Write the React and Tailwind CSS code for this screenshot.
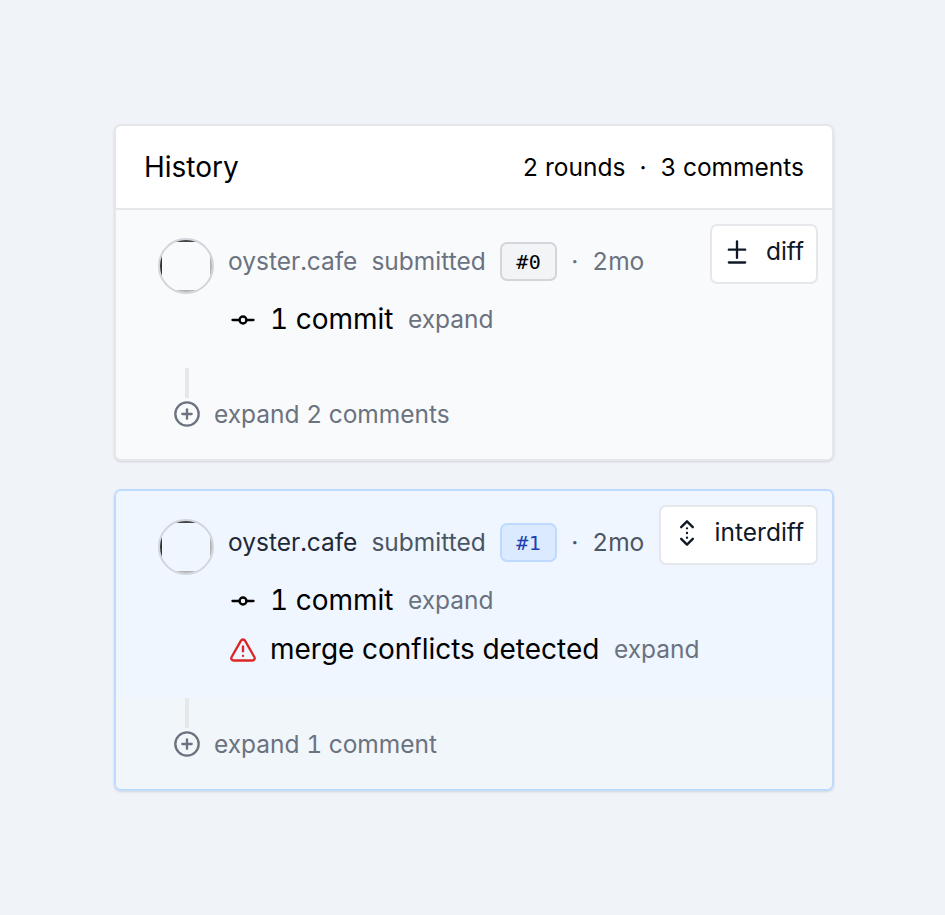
import { CirclePlus, Diff, GitCommitHorizontal, TriangleAlert } from 'lucide-react'

function InterdiffIcon({ className }) {
  return (
    <svg
      viewBox="0 0 24 24"
      fill="none"
      stroke="currentColor"
      strokeWidth="2"
      strokeLinecap="round"
      strokeLinejoin="round"
      className={className}
    >
      <path d="m7 7 5-5 5 5" />
      <path d="m7 17 5 5 5-5" />
      <path d="M12 8v.01M12 12v.01M12 16v.01" />
    </svg>
  )
}

function Avatar() {
  return (
    <div className="mt-[14px] size-14 shrink-0 overflow-hidden rounded-full border-2 border-gray-300">
      <div className="size-full border-2 border-t-[#444444] border-r-[#b4b4b0] border-b-[#b4b4b0] border-l-[#333333]" />
    </div>
  )
}

function Detail({ icon, children }) {
  return (
    <div className="flex h-[42px] items-center gap-[14px]">
      <span className="-mr-px ml-px mt-[2px]">{icon}</span>
      <span className="text-[28px] text-black">{children}</span>
      <span className="ml-[0.5px] text-[24.5px] text-[#6b7280]">expand</span>
    </div>
  )
}

function Round({ number, active, action, ActionIcon, conflicts }) {
  return (
    <div className={`flex gap-[14px] pt-[14px] pr-[14px] pb-7 pl-[42px] ${active ? 'bg-blue-50' : 'bg-gray-50'}`}>
      <Avatar />
      <div className="flex min-w-0 flex-1 flex-col gap-[7px]">
        <div className="mb-[7px] flex items-start justify-between">
          <div className={`-mb-[14px] flex h-[74px] items-center gap-[14px] text-[24.5px] ${active ? 'text-[#4b5563]' : 'text-[#6b7280]'}`}>
            <span className={active ? 'text-[#1f2937]' : 'text-[#6b7280]'}>oyster.cafe</span>
            <span>submitted</span>
            <span
              className={`ml-[0.5px] flex h-[39px] w-[57px] items-center justify-center rounded-[7px] border-2 pt-[2px] font-['DejaVu_Sans_Mono',monospace] text-[20px] tracking-[0.5px] ${
                active ? 'border-blue-200 bg-blue-100 text-[#1e40af]' : 'border-gray-300 bg-gray-100 text-black'
              }`}
            >
              #{number}
            </span>
            <span>·</span>
            <span>2mo</span>
          </div>
          <button className="flex h-[60px] items-center gap-[14px] rounded-[7px] border-2 border-gray-200 bg-white px-3 pb-[5px] text-[24.5px] text-gray-900">
            <ActionIcon className={active ? 'size-7' : '-ml-px mr-px size-7'} />
            {action}
          </button>
        </div>
        <Detail icon={<GitCommitHorizontal className="size-7 text-black" />}>1 commit</Detail>
        {conflicts && (
          <Detail icon={<TriangleAlert className="size-7 text-[#dc2626]" />}>merge conflicts detected</Detail>
        )}
      </div>
    </div>
  )
}

function Comments({ label, active }) {
  return (
    <div className={`flex h-[91px] flex-col items-start pl-[57px] text-[#6b7280] ${active ? 'bg-[#f1f6fa]' : 'bg-gray-50'}`}>
      <div className="ml-3 h-[30px] w-1 bg-gray-200" />
      <div className="-mt-[2px] flex h-[35px] items-center gap-[13px] text-[24.5px]">
        <CirclePlus className="size-7" />
        <span className="pt-[2px]">{label}</span>
      </div>
    </div>
  )
}

export default function App() {
  return (
    <main className="min-h-[915px] bg-[#f0f4f9] px-[114px] pt-[124px] font-['Inter',sans-serif] tabular-nums">
      <div className="flex w-[720px] flex-col gap-7">
        <section className="overflow-hidden rounded-[7px] border-2 border-gray-200 bg-white shadow-sm">
          <header className="flex h-[84px] items-center justify-between border-b-2 border-gray-200 px-7">
            <h1 className="text-[28px]">History</h1>
            <div className="flex gap-[14px] text-[24.5px]">
              <span>2 rounds</span>
              <span>·</span>
              <span>3 comments</span>
            </div>
          </header>
          <Round number={0} action="diff" ActionIcon={Diff} />
          <Comments label="expand 2 comments" />
        </section>
        <section className="overflow-hidden rounded-[7px] border-2 border-blue-200 shadow-sm">
          <Round number={1} active conflicts action="interdiff" ActionIcon={InterdiffIcon} />
          <Comments label="expand 1 comment" active />
        </section>
      </div>
    </main>
  )
}
